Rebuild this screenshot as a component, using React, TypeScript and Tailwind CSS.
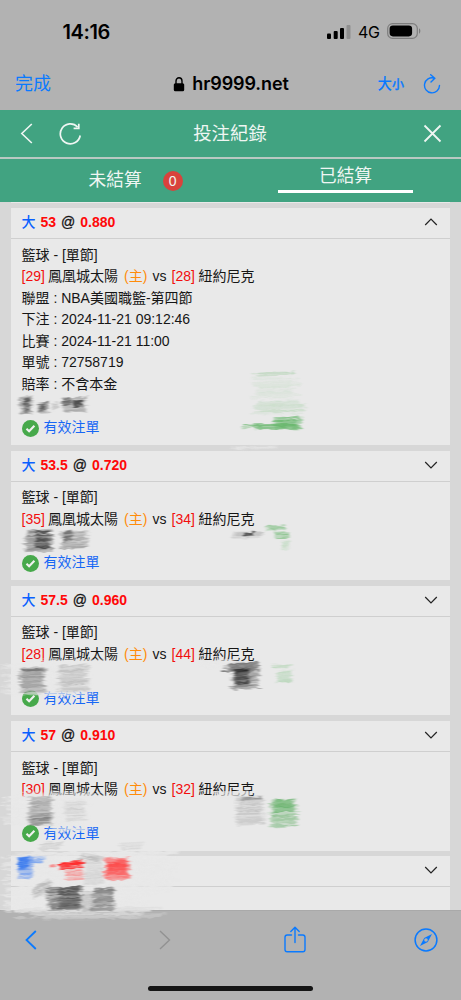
import React from "react";

type Stroke = {
  x: number;
  y: number;
  w: number;
  h: number;
  color: string;
  opacity: number;
  density?: number;
  slant?: number;
};

type Bet = {
  line: string;
  odds: string;
  home: number;
  away: number;
  details?: [string, string][];
};

const bets: Bet[] = [
  {
    line: "53",
    odds: "0.880",
    home: 29,
    away: 28,
    details: [
      ["聯盟", "NBA美國職籃-第四節"],
      ["下注", "2024-11-21 09:12:46"],
      ["比賽", "2024-11-21 11:00"],
      ["單號", "72758719"],
      ["賠率", "不含本金"],
    ],
  },
  { line: "53.5", odds: "0.720", home: 35, away: 34 },
  { line: "57.5", odds: "0.960", home: 28, away: 44 },
  { line: "57", odds: "0.910", home: 30, away: 32 },
];

const paper = "#e8e8e8";

const strokes: Stroke[] = [
  // first card
  { x: 19, y: 397, w: 14, h: 17, color: "#888", opacity: 0.3 },
  { x: 24, y: 398, w: 6, h: 14, color: "#444", opacity: 0.32 },
  { x: 37, y: 403, w: 12, h: 10, color: "#777", opacity: 0.38 },
  { x: 40, y: 404, w: 6, h: 7, color: "#444", opacity: 0.26 },
  { x: 52, y: 403, w: 6, h: 7, color: "#999", opacity: 0.15 },
  { x: 61, y: 398, w: 27, h: 14, color: "#888", opacity: 0.3 },
  { x: 63, y: 399, w: 8, h: 8, color: "#555", opacity: 0.34 },
  { x: 73, y: 401, w: 10, h: 7, color: "#333", opacity: 0.38 },
  { x: 250, y: 373, w: 54, h: 3, color: "#86c189", opacity: 0.2 },
  { x: 249, y: 378, w: 52, h: 21, color: "#a6d2a8", opacity: 0.1, density: 0.8 },
  { x: 250, y: 401, w: 58, h: 13, color: "#92c995", opacity: 0.13, density: 0.9 },
  { x: 272, y: 417, w: 31, h: 12, color: "#61b466", opacity: 0.32 },
  { x: 241, y: 424, w: 62, h: 5, color: "#61b466", opacity: 0.3 },
  { x: 230, y: 446, w: 54, h: 4, color: paper, opacity: 0.25 },
  // second card
  { x: 23, y: 530, w: 31, h: 22, color: "#777", opacity: 0.34 },
  { x: 34, y: 531, w: 17, h: 18, color: "#222", opacity: 0.22 },
  { x: 59, y: 531, w: 31, h: 18, color: "#888", opacity: 0.25, slant: -1 },
  { x: 63, y: 531, w: 10, h: 11, color: "#444", opacity: 0.22 },
  { x: 232, y: 532, w: 31, h: 6, color: "#999", opacity: 0.18 },
  { x: 243, y: 533, w: 11, h: 3, color: "#222", opacity: 0.4 },
  { x: 265, y: 526, w: 21, h: 4, color: "#61b466", opacity: 0.28 },
  { x: 273, y: 532, w: 17, h: 7, color: "#61b466", opacity: 0.22 },
  { x: 281, y: 541, w: 9, h: 9, color: "#a6d2a8", opacity: 0.16 },
  // third card
  { x: 0, y: 664, w: 92, h: 31, color: paper, opacity: 0.42 },
  { x: 24, y: 660, w: 90, h: 4, color: paper, opacity: 0.28 },
  { x: 44, y: 692, w: 50, h: 4, color: paper, opacity: 0.25 },
  { x: 18, y: 668, w: 29, h: 25, color: "#777", opacity: 0.26 },
  { x: 22, y: 669, w: 24, h: 3, color: "#555", opacity: 0.25 },
  { x: 56, y: 665, w: 34, h: 27, color: "#aaa", opacity: 0.2 },
  { x: 198, y: 660, w: 45, h: 8, color: paper, opacity: 0.3 },
  { x: 222, y: 664, w: 38, h: 8, color: "#555", opacity: 0.34, slant: -2 },
  { x: 230, y: 663, w: 31, h: 27, color: "#777", opacity: 0.3 },
  { x: 233, y: 669, w: 18, h: 16, color: "#111", opacity: 0.24 },
  { x: 270, y: 665, w: 22, h: 3, color: "#8ac68c", opacity: 0.2 },
  { x: 276, y: 671, w: 17, h: 12, color: "#8ac68c", opacity: 0.15 },
  // fourth card
  { x: 0, y: 796, w: 92, h: 29, color: paper, opacity: 0.42 },
  { x: 20, y: 792, w: 93, h: 4, color: paper, opacity: 0.3 },
  { x: 47, y: 827, w: 44, h: 5, color: paper, opacity: 0.28 },
  { x: 27, y: 797, w: 27, h: 29, color: "#888", opacity: 0.24 },
  { x: 28, y: 815, w: 24, h: 10, color: "#666", opacity: 0.15 },
  { x: 63, y: 801, w: 24, h: 20, color: "#aaa", opacity: 0.09 },
  { x: 208, y: 792, w: 46, h: 6, color: paper, opacity: 0.34 },
  { x: 234, y: 797, w: 32, h: 28, color: "#aaa", opacity: 0.18 },
  { x: 241, y: 798, w: 23, h: 2, color: "#777", opacity: 0.26 },
  { x: 268, y: 799, w: 31, h: 28, color: "#79b77c", opacity: 0.26 },
  { x: 272, y: 800, w: 23, h: 12, color: "#4caa52", opacity: 0.2 },
  // last card and the bar below it
  { x: 0, y: 852, w: 150, h: 60, color: paper, opacity: 0.5 },
  { x: 80, y: 852, w: 100, h: 42, color: paper, opacity: 0.5 },
  { x: 38, y: 843, w: 25, h: 7, color: "#ccc", opacity: 0.3 },
  { x: 119, y: 843, w: 25, h: 7, color: "#ccc", opacity: 0.22 },
  { x: 17, y: 857, w: 17, h: 22, color: "#4a83ef", opacity: 0.24 },
  { x: 18, y: 858, w: 11, h: 11, color: "#1764ef", opacity: 0.34 },
  { x: 25, y: 857, w: 21, h: 8, color: "#4382f1", opacity: 0.2 },
  { x: 50, y: 865, w: 6, h: 2, color: "#ff4b4b", opacity: 0.3 },
  { x: 58, y: 863, w: 28, h: 7, color: "#ff2222", opacity: 0.45, slant: -3 },
  { x: 63, y: 870, w: 23, h: 11, color: "#ff5555", opacity: 0.18 },
  { x: 77, y: 853, w: 25, h: 5, color: "#999", opacity: 0.18, slant: 3 },
  { x: 83, y: 858, w: 22, h: 27, color: "#bbb", opacity: 0.14 },
  { x: 103, y: 858, w: 28, h: 22, color: "#ff5050", opacity: 0.32 },
  { x: 105, y: 861, w: 24, h: 13, color: "#ff2c2c", opacity: 0.22 },
  { x: 14, y: 908, w: 156, h: 11, color: "#ddd", opacity: 0.35 },
  { x: 31, y: 886, w: 22, h: 13, color: "#aaa", opacity: 0.24, slant: -7 },
  { x: 45, y: 887, w: 40, h: 24, color: "#666", opacity: 0.33 },
  { x: 57, y: 887, w: 26, h: 21, color: "#333", opacity: 0.2 },
  { x: 81, y: 891, w: 13, h: 21, color: "#aaa", opacity: 0.22 },
  { x: 90, y: 888, w: 26, h: 23, color: "#777", opacity: 0.33 },
];

function hatch(s: Stroke, seed: number) {
  let state = seed * 7919 + 17;
  const rand = () => {
    state = (state * 16807) % 2147483647;
    return state / 2147483647;
  };
  for (let i = 0; i < 5; i++) rand();
  const count = Math.max(3, Math.round(s.h * (s.density ?? 1.3)));
  const slant = s.slant ?? -1;
  return Array.from({ length: count }, (_, i) => {
    const y = s.y + (i / count) * s.h + rand();
    const x1 = s.x + rand() * s.w * 0.22;
    const x2 = s.x + s.w - rand() * s.w * 0.22;
    const rise = slant * (0.5 + rand());
    return {
      d: `M${x1.toFixed(1)} ${y.toFixed(1)}L${x2.toFixed(1)} ${(y + rise).toFixed(1)}`,
      opacity: Math.min(1, s.opacity * (0.7 + rand() * 1.1)),
    };
  });
}

function Scribbles() {
  return (
    <svg
      className="pointer-events-none absolute left-0 top-0"
      width="461"
      height="1000"
      viewBox="0 0 461 1000"
      fill="none"
      aria-hidden="true"
    >
      <filter id="soft" x="0" y="0" width="461" height="1000" filterUnits="userSpaceOnUse" colorInterpolationFilters="sRGB">
        <feTurbulence type="fractalNoise" baseFrequency="0.12 0.35" numOctaves="2" seed="4" result="noise" />
        <feDisplacementMap in="SourceGraphic" in2="noise" scale="4" xChannelSelector="R" yChannelSelector="G" />
        <feGaussianBlur stdDeviation="0.9 0.55" />
      </filter>
      <g filter="url(#soft)">
        {strokes.map((s, i) => (
          <g key={i} stroke={s.color} strokeWidth="1.5" strokeLinecap="round">
            {hatch(s, i + 1).map((line, j) => (
              <path key={j} d={line.d} strokeOpacity={line.opacity} />
            ))}
          </g>
        ))}
      </g>
    </svg>
  );
}

function Chevron({ up = false }: { up?: boolean }) {
  return (
    <svg className="mb-[2px]" width="14" height="8" viewBox="0 0 14 8" fill="none" stroke="#222" strokeWidth="1.2">
      <path d={up ? "M1.2 7L7 1.2L12.8 7" : "M1.2 1L7 6.8L12.8 1"} />
    </svg>
  );
}

function CardHeader({ bet, open }: { bet?: Bet; open?: boolean }) {
  return (
    <div className="flex h-[31px] shrink-0 items-center justify-between border-b border-[#cfcfcf] pl-[10.5px] pr-[12px]">
      <div className="flex items-center gap-[5px] pb-[1.4px] text-[14px] leading-none font-bold">
        {bet && (
          <>
            <span className="font-medium text-[#0a60ff]">大</span>
            <span className="text-[#ff0808]">{bet.line}</span>
            <span className="font-normal [-webkit-text-stroke:0.3px_#111]">@</span>
            <span className="text-[#ff0808]">{bet.odds}</span>
          </>
        )}
      </div>
      <Chevron up={open} />
    </div>
  );
}

function BetCard({ bet }: { bet: Bet }) {
  return (
    <article className={bet.details ? "h-[237px] shrink-0 bg-[#e9e9e9]" : "h-[129.5px] shrink-0 bg-[#e9e9e9]"}>
      <CardHeader bet={bet} open={!!bet.details} />
      <div className="pl-[10.5px] pt-[5.5px] text-[14px] leading-[21.5px] whitespace-pre">
        <p>籃球 - [單節]</p>
        <p className="flex">
          <span className="w-[26.5px] text-[#f20d0d]">[{bet.home}]</span>
          <span className="w-[76px]">鳳凰城太陽</span>
          <span className="w-[28.5px] text-[#ff8c0a]">(主)</span>
          <span className="w-[19px]">vs</span>
          <span className="w-[27px] text-[#f20d0d]">[{bet.away}]</span>
          <span>紐約尼克</span>
        </p>
        {bet.details?.map(([label, value]) => (
          <p key={label}>
            {label} : {value}
          </p>
        ))}
        <div className="h-[21.5px]" />
        <p className="flex h-[23px] items-center gap-[5px] text-[#1767f5]">
          <svg width="17" height="17" viewBox="0 0 17 17" fill="none">
            <circle cx="8.5" cy="8.5" r="8.5" fill="#47a94b" />
            <path d="M4.5 8.8L7.1 11.3L12.4 5.8" stroke="#f1f1f1" strokeWidth="2.1" />
          </svg>
          有效注單
        </p>
      </div>
    </article>
  );
}

export default function App() {
  return (
    <div className="relative flex h-[1000px] w-[461px] flex-col overflow-hidden bg-[#b2b2b2] font-['Liberation_Sans','Noto_Sans_CJK_TC',sans-serif] text-[#161616]">
      <div className="flex h-[62px] shrink-0 items-center justify-between pl-[62.5px] pr-[40px] pt-[1px] text-black">
        <span className="font-['Inter',sans-serif] text-[20px] leading-none font-semibold tracking-[-0.4px]">14:16</span>
        <div className="flex items-center">
          <svg width="24" height="16" viewBox="0 0 24 16">
            <rect x="0" y="9.5" width="4" height="5.5" rx="1" />
            <rect x="6.7" y="7" width="4" height="8" rx="1" />
            <rect x="13" y="4" width="4" height="11" rx="1" />
            <rect x="19.5" y="1" width="4" height="14" rx="1" fill="#8f8f8f" />
          </svg>
          <span className="ml-[7px] w-[22px] pt-[1px] font-['Inter',sans-serif] text-[16px] leading-none tracking-[-0.4px]">4G</span>
          <svg className="-mt-[1px] ml-[7px]" width="34" height="16" viewBox="0 0 34 16">
            <rect x="0.7" y="0.7" width="29.6" height="14.6" rx="4.8" fill="none" stroke="#7d7d7d" strokeWidth="1.2" />
            <rect x="2.6" y="2.6" width="22.5" height="10.8" rx="3.3" />
            <path d="M32 5.3C33.8 6 33.8 10 32 10.7Z" fill="#7d7d7d" />
          </svg>
        </div>
      </div>

      <div className="grid h-[48px] shrink-0 grid-cols-[1fr_auto_1fr] items-center pb-[4px] pl-[15px] pr-[20px]">
        <span className="text-[18px] leading-none text-[#0a7aff]">完成</span>
        <div className="flex items-center gap-[7px] pl-[6px] text-black">
          <svg width="12" height="15" viewBox="0 0 12 15">
            <rect x="0.8" y="6.3" width="10.4" height="8" rx="1.5" />
            <path d="M3 7V4A3 3.2 0 0 1 9 4V7" fill="none" stroke="black" strokeWidth="1.4" />
          </svg>
          <span className="font-['Inter',sans-serif] text-[18px] leading-none font-semibold tracking-[-0.1px]">hr9999.net</span>
        </div>
        <div className="flex items-center justify-end text-[#0a7aff]">
          <span className="flex items-baseline pt-[1px] leading-none font-medium">
            <span className="text-[14.5px]">大</span>
            <span className="text-[12px] [-webkit-text-stroke:0.3px_currentColor]">小</span>
          </span>
          <svg className="ml-[19px]" width="18" height="20" viewBox="0 0 18 20" fill="none" stroke="currentColor" strokeWidth="1.4">
            <path d="M11 4.1A7.5 7.5 0 1 0 16.5 11.5M7.7 0.7L11.8 4.2L8 8" strokeLinecap="round" />
          </svg>
        </div>
      </div>

      <header className="flex h-[49px] shrink-0 items-center justify-between border-b-2 border-[#b8c9c2] bg-[#41a381] pl-[20px] pr-[19px] text-[#eff6f3]">
        <div className="flex w-[62px] items-center gap-[26px]">
          <svg width="13" height="21" viewBox="0 0 13 21" fill="none" stroke="currentColor" strokeWidth="1.6">
            <path d="M11.8 1L1.8 10.5L11.8 20" />
          </svg>
          <svg className="shrink-0" width="23" height="22" viewBox="0 0 23 22" fill="none" stroke="currentColor" strokeWidth="1.7">
            <path d="M18.6 4A10 10 0 1 0 21.2 12.5M19.8 0.8V5.4H14.6" />
          </svg>
        </div>
        <h1 className="pr-[2px] pt-[2px] text-[18.4px] leading-none">投注紀錄</h1>
        <div className="flex w-[62px] justify-end">
          <svg width="19" height="19" viewBox="0 0 19 19" fill="none" stroke="currentColor" strokeWidth="1.8">
            <path d="M1.5 1.5L17.5 17.5M17.5 1.5L1.5 17.5" />
          </svg>
        </div>
      </header>

      <nav className="flex h-[43px] shrink-0 bg-[#41a381] text-[17.7px] leading-none text-[#eff6f3]">
        <div className="flex flex-1 items-center gap-[21px] pl-[88.5px]">
          <span>未結算</span>
          <span className="flex size-[20px] items-center justify-center rounded-full bg-[#d9423c] text-[14px]">0</span>
        </div>
        <div className="flex w-[183px] flex-col items-start">
          <span className="box-border flex h-[34px] w-[135px] items-center justify-center border-b-[3px] border-white pt-[5px]">已結算</span>
        </div>
      </nav>

      <main className="flex h-[708px] shrink-0 flex-col gap-[5.7px] overflow-hidden bg-[#d7d7d7] px-[11px]">
        <div className="-mb-[0.7px] h-px shrink-0 bg-[#e9e9e9]" />
        {bets.map((bet) => (
          <BetCard key={bet.line} bet={bet} />
        ))}
        <article className="h-[100px] shrink-0 bg-[#e9e9e9]">
          <CardHeader />
        </article>
      </main>

      <footer className="flex h-[90px] shrink-0 flex-col justify-between border-t border-[#a9a9a9] pt-[13px] pb-[9px] text-[#0a7aff]">
        <div className="flex h-[32px] items-center pl-[25px] pr-[23px]">
          <svg width="12" height="20" viewBox="0 0 12 20" fill="none" stroke="currentColor" strokeWidth="1.8">
            <path d="M10.8 1L1.5 10L10.8 19" />
          </svg>
          <svg className="ml-[122px]" width="12" height="20" viewBox="0 0 12 20" fill="none" stroke="#929292" strokeWidth="1.4">
            <path d="M1 1L10.5 10L1 19" />
          </svg>
          <svg className="mb-[2px] ml-[113px]" width="22" height="27" viewBox="0 0 22 27" fill="none" stroke="currentColor" strokeWidth="1.4" strokeLinecap="round" strokeLinejoin="round">
            <path d="M7.5 9H3.2Q1 9 1 11.2V23.5Q1 25.8 3.2 25.8H18.8Q21 25.8 21 23.5V11.2Q21 9 18.8 9H14.5M11 16.5V1.5M6.8 5.5L11 1.2L15.2 5.5" />
          </svg>
          <svg className="ml-auto" width="24" height="24" viewBox="0 0 24 24" fill="none">
            <circle cx="12" cy="12" r="10.9" stroke="currentColor" strokeWidth="1.5" />
            <path fillRule="evenodd" fill="currentColor" d="M18 6L13.8 14L6 18L10.2 10ZM12 10.2A1.8 1.8 0 1 0 12 13.8A1.8 1.8 0 0 0 12 10.2Z" />
          </svg>
        </div>
        <div className="mx-auto h-[5px] w-[165px] rounded-full bg-[#151515]" />
      </footer>
      <Scribbles />
    </div>
  );
}
